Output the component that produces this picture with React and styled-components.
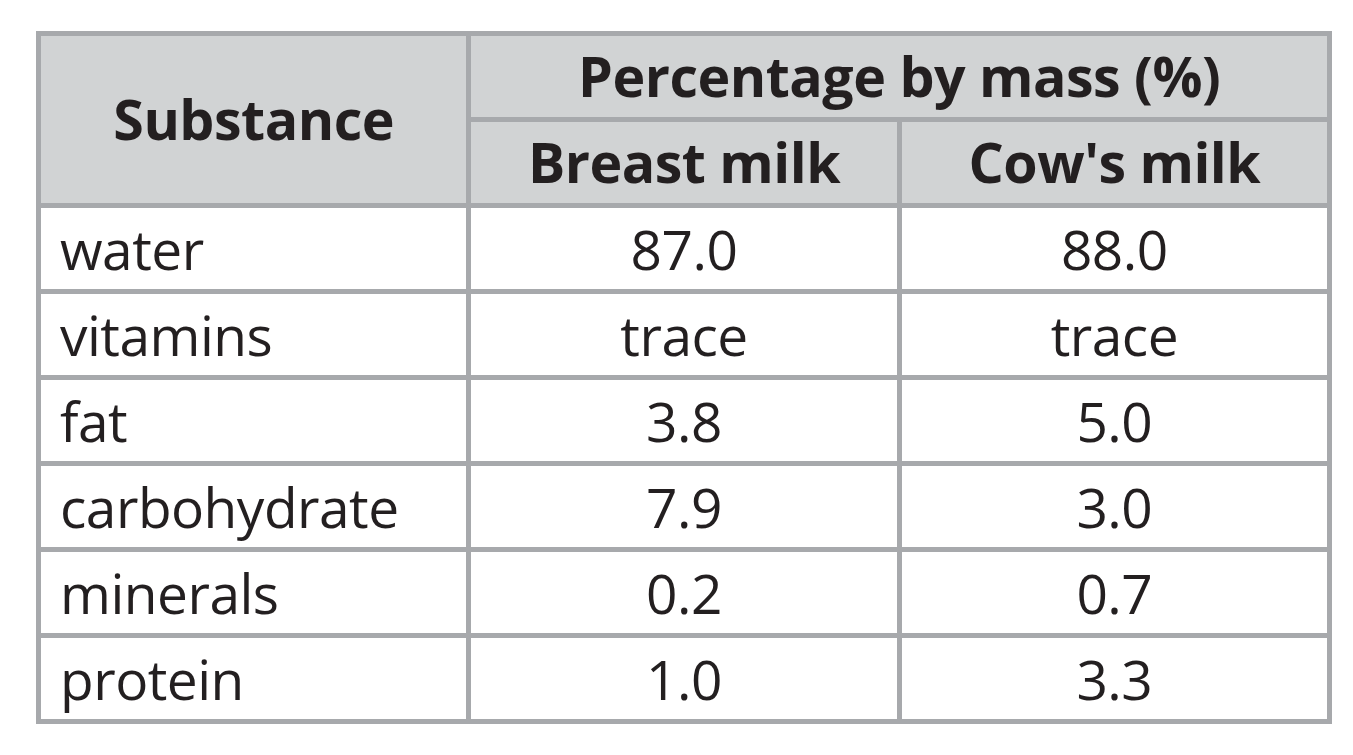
import React from "react";
import styled, { createGlobalStyle } from "styled-components";

const GlobalStyle = createGlobalStyle`
    html, body {
        margin: 0;
        padding: 0;
        background: #ffffff;
    }
`;

const Page = styled.div`
    padding: 31px 0 0 36px;
    font-family: "Open Sans", "Liberation Sans", sans-serif;
    color: #231f20;
`;

const Table = styled.table`
    width: 1296px;
    table-layout: fixed;
    border-collapse: separate;
    border-spacing: 5px;
    background: #a7a9ac;
`;

const HeadCell = styled.th`
    height: 81px;
    padding: 0;
    background: #d1d3d4;
    font-weight: 700;
    font-size: 55.5px;
    line-height: 1.2;
    letter-spacing: -0.5px;
    text-align: center;
    vertical-align: middle;
`;

const Cell = styled.td`
    height: 81px;
    padding: 0 ${props => (props.$label ? "19px" : "0")};
    background: #ffffff;
    font-size: 55px;
    line-height: 1.2;
    letter-spacing: -0.5px;
    text-align: ${props => (props.$label ? "left" : "center")};
    vertical-align: middle;
`;

const rows = [
    ["water", "87.0", "88.0"],
    ["vitamins", "trace", "trace"],
    ["fat", "3.8", "5.0"],
    ["carbohydrate", "7.9", "3.0"],
    ["minerals", "0.2", "0.7"],
    ["protein", "1.0", "3.3"]
];

export default function App() {
    return (
        <Page>
            <GlobalStyle />
            <Table>
                <thead>
                    <tr>
                        <HeadCell rowSpan={2}>Substance</HeadCell>
                        <HeadCell colSpan={2}>Percentage by mass (%)</HeadCell>
                    </tr>
                    <tr>
                        <HeadCell>Breast milk</HeadCell>
                        <HeadCell>Cow's milk</HeadCell>
                    </tr>
                </thead>
                <tbody>
                    {rows.map(([name, breast, cow]) => (
                        <tr key={name}>
                            <Cell $label>{name}</Cell>
                            <Cell>{breast}</Cell>
                            <Cell>{cow}</Cell>
                        </tr>
                    ))}
                </tbody>
            </Table>
        </Page>
    );
}
